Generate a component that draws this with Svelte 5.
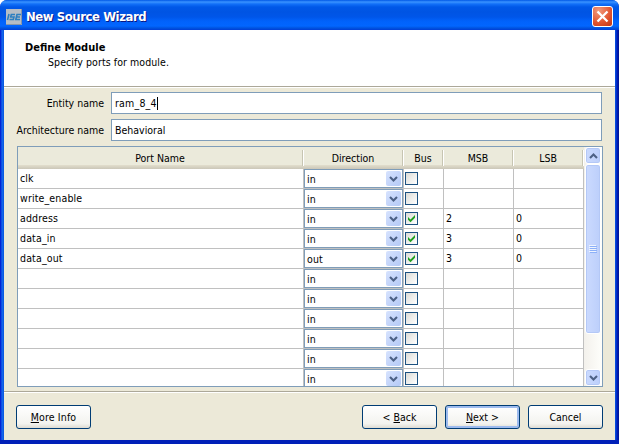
<script>
  let entity = $state('ram_8_4');
  let architecture = $state('Behavioral');
  const ports = [
    { name: 'clk', dir: 'in', bus: false, msb: '', lsb: '' },
    { name: 'write_enable', dir: 'in', bus: false, msb: '', lsb: '' },
    { name: 'address', dir: 'in', bus: true, msb: '2', lsb: '0' },
    { name: 'data_in', dir: 'in', bus: true, msb: '3', lsb: '0' },
    { name: 'data_out', dir: 'out', bus: true, msb: '3', lsb: '0' },
    ...Array.from({ length: 6 }, () => ({ name: '', dir: 'in', bus: false, msb: '', lsb: '' }))
  ];
</script>

{#snippet chevron(up)}
  <svg class="chev" class:up width="9" height="6" viewBox="0 0 9 6">
    <path d="M1 1 L4.5 4.5 L8 1" fill="none" stroke="#4d6185" stroke-width="2.1" />
  </svg>
{/snippet}

<div class="window">
  <header class="titlebar">
    <svg class="logo" width="16" height="16" viewBox="0 0 16 16">
      <rect width="16" height="16" fill="#b5bdc5" />
      <path d="M0 15.5H15.5V0" fill="none" stroke="#8796a8" />
      <path d="M3 5 L1.5 11 M9 5.5H5.3L4.7 8H8L7.3 10.5H3.5 M15 5.5H11L9.8 10.5H14 M10.5 8H14" fill="none" stroke="#2c7fc0" stroke-width="1.6" />
    </svg>
    <h1>New Source Wizard</h1>
    <button class="close" aria-label="Close">
      <svg width="19" height="19" viewBox="0 0 19 19">
        <path d="M4.5 4.5 L14.5 14.5 M14.5 4.5 L4.5 14.5" stroke="#fff" stroke-width="2.3" />
      </svg>
    </button>
  </header>
  <div class="body">
    <section class="intro">
      <h2>Define Module</h2>
      <p>Specify ports for module.</p>
    </section>
    <section class="form">
      <div class="field">
        <span class="label">Entity name</span>
        <div class="input"><span>{entity}</span><i class="caret"></i></div>
      </div>
      <div class="field">
        <span class="label">Architecture name</span>
        <div class="input"><span class="arch">{architecture}</span></div>
      </div>
    </section>
    <section class="table">
      <div class="grid">
        <div class="row head">
          <span>Port Name</span><span>Direction</span><span>Bus</span><span>MSB</span><span>LSB</span>
        </div>
        {#each ports as p}
          <div class="row">
            <div class="cell">{p.name}</div>
            <div class="cell dir">
              <div class="combo"><span>{p.dir}</span><b>{@render chevron(false)}</b></div>
            </div>
            <div class="cell bus">
              <div class="check">
                {#if p.bus}
                  <svg width="11" height="11" viewBox="0 0 11 11">
                    <path d="M2 4 L4.5 6.5 L9 2 V4.8 L4.5 9.3 L2 6.8 Z" fill="#21a121" />
                  </svg>
                {/if}
              </div>
            </div>
            <div class="cell num">{p.msb}</div>
            <div class="cell num">{p.lsb}</div>
          </div>
        {/each}
      </div>
      <div class="scroll">
        <div class="arrow">{@render chevron(true)}</div>
        <div class="thumb"><i></i><i></i><i></i><i></i></div>
        <div class="space"></div>
        <div class="arrow">{@render chevron(false)}</div>
      </div>
    </section>
    <footer>
      <button class="btn more"><span><u>M</u>ore Info</span></button>
      <button class="btn"><span>&lt; <u>B</u>ack</span></button>
      <button class="btn default"><span><u>N</u>ext &gt;</span></button>
      <button class="btn"><span>Cancel</span></button>
    </footer>
  </div>
</div>

<style>
  :global(body) { margin: 0; background: #fff; overflow: hidden; }
  * { box-sizing: border-box; }
  .window {
    width: 619px; height: 444px; display: flex; flex-direction: column;
    padding: 0 4px 4px; border-radius: 7px 7px 0 0; overflow: hidden;
    background: linear-gradient(90deg, #0019cf 0, #0831d9 1px, #166aee 2px, #0855dd 4px, #0855dd 615px, #0441d8 616px, #001dbd 617px, #00138c 619px);
    font: 10.5px/14px "DejaVu Sans Condensed", "DejaVu Sans", sans-serif; font-stretch: condensed; color: #000;
    box-shadow: inset 0 -4px 0 #0020b8;
  }
  .titlebar {
    height: 30px; flex: none; margin: 0 -4px; padding: 3px 6px 0 6px; display: flex; align-items: center;
    background: linear-gradient(#0058e6 0, #3a93ff 2px, #1270f8 4px, #0058e8 7px, #0054e3 12px, #0056e9 17px, #0162fb 21px, #0266ff 26px, #0054e0 28px, #003dd7 30px);
  }
  h1 { margin: 0 auto 0 4px; font-size: 13px; line-height: 18px; font-weight: bold; color: #fff; text-shadow: 1px 1px #0a1883; letter-spacing: -.45px; }
  .close { width: 21px; height: 21px; padding: 0; border: 1px solid #fff; border-radius: 3px; background: radial-gradient(circle at 30% 20%, #f19a7d, #e1532e 60%, #bf3514); }
  .close svg { display: block; }
  .body { flex: 1; min-height: 0; background: #ece9d8; display: flex; flex-direction: column; }
  .intro { height: 57px; flex: none; background: #fff; border-bottom: 1px solid #aca899; padding: 10px 0 0 21px; box-shadow: 0 1px #fff; }
  h2 { margin: 0; font-size: 11px; line-height: 15px; font-weight: bold; }
  p { margin: 0 0 0 23px; line-height: 15px; letter-spacing: .08px; }
  .form { padding: 5px 13px 0 12px; display: flex; flex-direction: column; gap: 5px; }
  .field { height: 22px; display: flex; align-items: center; }
  .label { width: 88px; margin-right: 7px; text-align: right; white-space: nowrap; }
  .input { flex: 1; height: 22px; display: flex; align-items: center; background: #fff; border: 1px solid #7f9db9; padding-left: 3px; letter-spacing: .2px; }
  .arch { letter-spacing: 0; }
  .caret { width: 1px; height: 13px; background: #000; }
  .table { width: 586px; height: 241px; margin: 5px 0 0 13px; flex: none; border: 1px solid #7f9db9; background: #fff; display: flex; overflow: hidden; }
  .grid { width: 566px; flex: none; height: 239px; overflow: hidden; }
  .row { display: grid; grid-template-columns: 286px 100px 40px 70px 70px; height: 20px; }
  .head { height: 22px; background: linear-gradient(#ebeadb 18px, #e2decd 18px, #d6d2c2 20px, #cbc7b8 22px); text-align: center; line-height: 22px; }
  .head span { padding-right: 2px; background: linear-gradient(#c7c5b2, #c7c5b2) right 1px top 3px / 1px 16px no-repeat, linear-gradient(#fff, #fff) right 0 top 3px / 1px 16px no-repeat; }
  .cell { border-right: 1px solid #c0c0c0; border-bottom: 1px solid #c0c0c0; padding: 0 2px; line-height: 18px; letter-spacing: .15px; }
  .dir { padding: 0; }
  .combo { height: 19px; border: 1px solid #7f9db9; display: flex; padding: 1px 1px 1px 2px; justify-content: space-between; background: #fff; line-height: 16px; }
  .combo b { width: 15px; height: 15px; border-radius: 2px; background: linear-gradient(135deg, #d7e3fe, #b4c9f6); display: grid; place-items: center; }
  .bus { padding: 3px 0 0 1px; }
  .check { width: 13px; height: 13px; border: 1px solid #1c5180; background: linear-gradient(135deg, #dcdcd7, #fff); }
  .check svg { display: block; }
  .scroll { width: 18px; display: flex; flex-direction: column; background: linear-gradient(90deg, #f3f1ec, #fefefb); padding: 0 1px; }
  .arrow, .thumb { border: 1px solid #fff; border-radius: 3px; background: linear-gradient(90deg, #cbdafe, #bccffb); box-shadow: inset 0 0 0 1px #b4c8f6; }
  .arrow { height: 17px; flex: none; display: grid; place-items: center; }
  .chev { display: block; }
  .up { transform: rotate(180deg); }
  .thumb { height: 170px; flex: none; display: flex; flex-direction: column; align-items: center; justify-content: center; gap: 1px; }
  .thumb i { width: 7px; height: 1px; background: #8cb0f8; box-shadow: -1px -1px #eef4fe; }
  .space { flex: 1; }
  footer { margin-top: 4px; flex: 1; border-top: 1px solid #aca899; box-shadow: inset 0 1px #fff; display: flex; gap: 8px; padding: 13px 12px 0; }
  .btn { width: 75px; height: 24px; padding: 0; border: 1px solid #003c74; border-radius: 3px; background: linear-gradient(#fff, #f3f3ef 80%, #dedbd2); font: inherit; line-height: 20px; color: #000; }
  .more { margin-right: auto; letter-spacing: .15px; }
  .default { box-shadow: inset 0 0 0 2px #9dbbee; }
  u { text-underline-offset: 1px; }
</style>
